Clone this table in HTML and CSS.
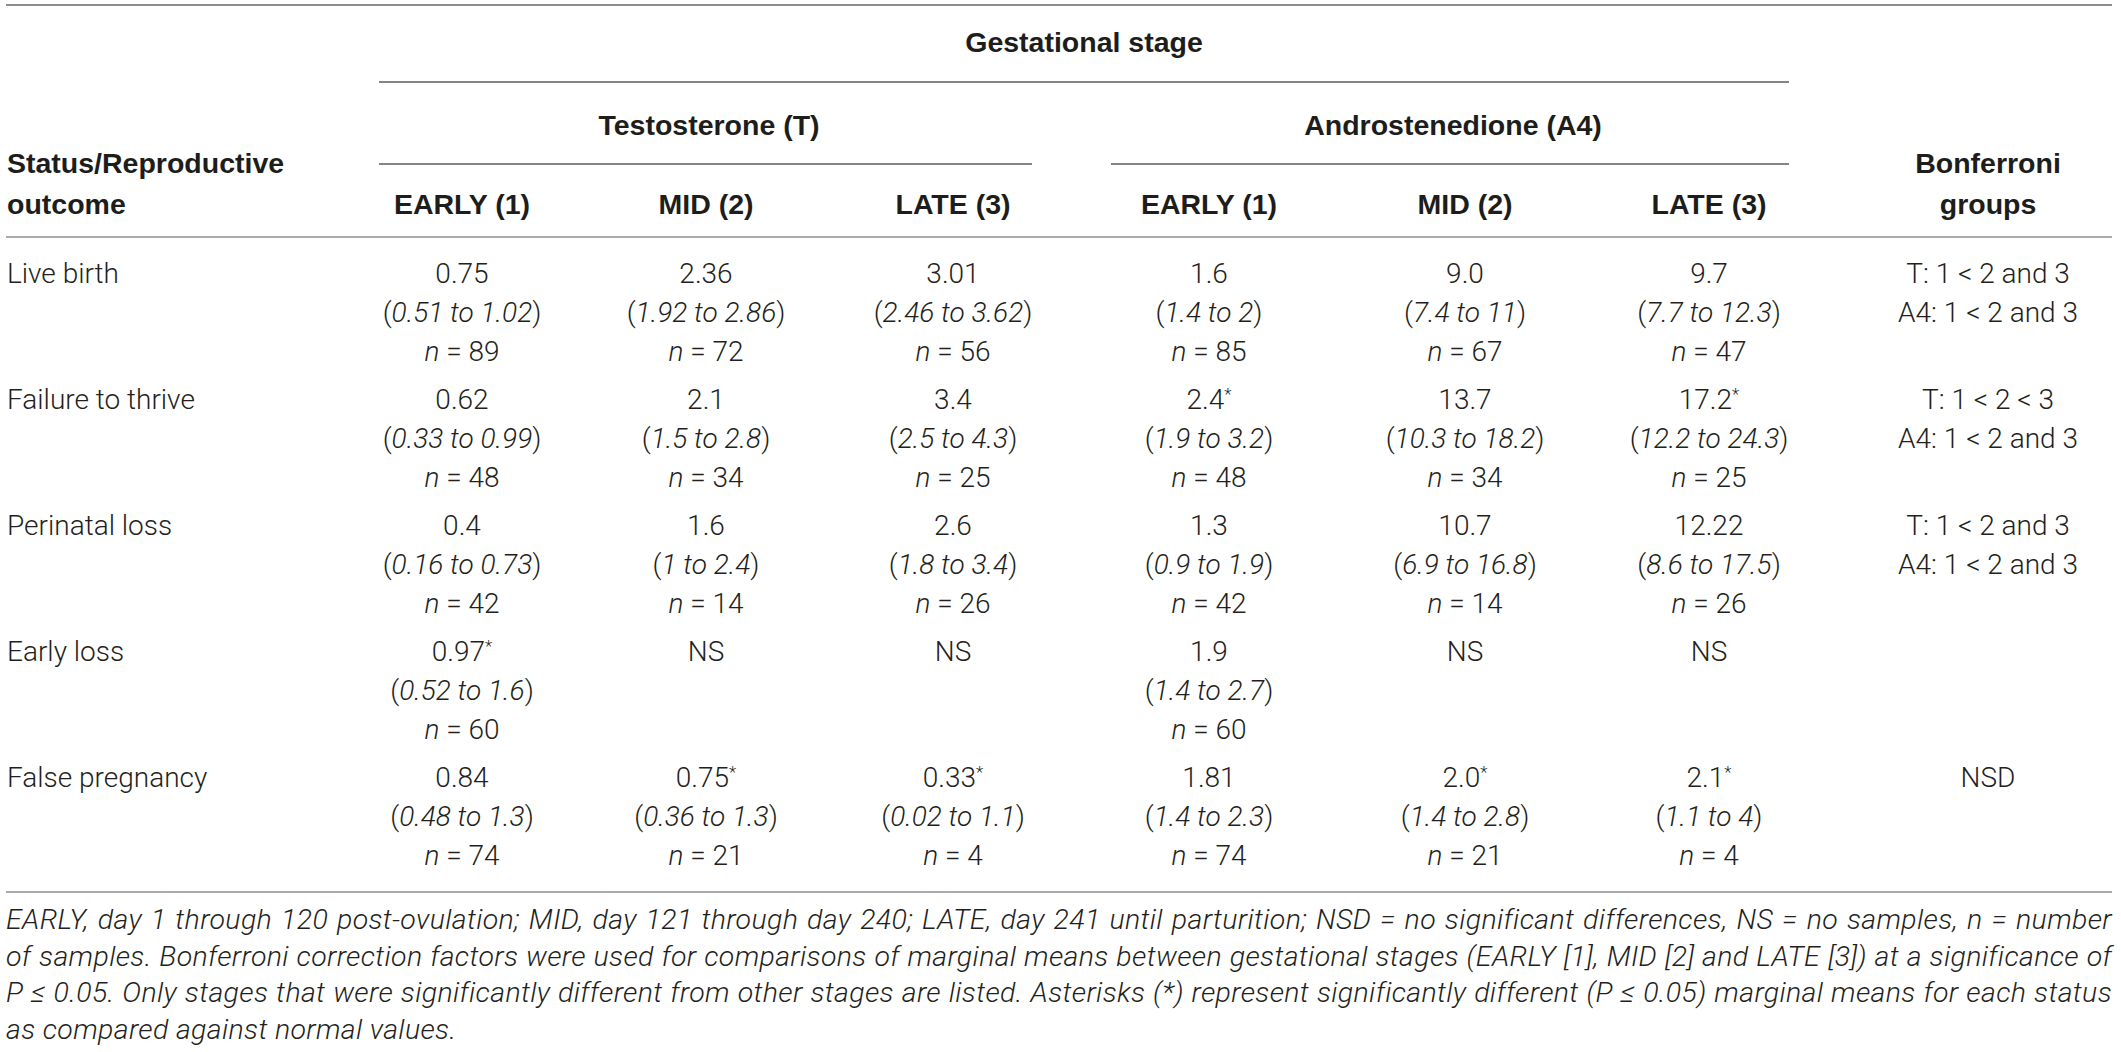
FILE: index.html
```html
<!DOCTYPE html>
<html lang="en">
<head>
<meta charset="utf-8">
<title>Table</title>
<link rel="stylesheet" href="styles.css">
</head>
<body>
<div class="page">
<table class="tbl">
  <colgroup>
    <col class="c-stub"><col class="c-t1"><col class="c-t2"><col class="c-t3"><col class="c-a1"><col class="c-a2"><col class="c-a3"><col class="c-bf">
  </colgroup>
  <thead>
    <tr class="hr1">
      <th rowspan="3" class="stub">Status/Reproductive<br>outcome</th>
      <th colspan="6" class="grp"><div class="lbl">Gestational stage</div><div class="rule rule-g"></div></th>
      <th rowspan="3" class="bonf">Bonferroni<br>groups</th>
    </tr>
    <tr class="hr2">
      <th colspan="3" class="grp"><div class="lbl">Testosterone (T)</div><div class="rule rule-t"></div></th>
      <th colspan="3" class="grp"><div class="lbl">Androstenedione (A4)</div><div class="rule rule-a"></div></th>
    </tr>
    <tr class="hr3">
      <th>EARLY (1)</th><th>MID (2)</th><th>LATE (3)</th>
      <th>EARLY (1)</th><th>MID (2)</th><th>LATE (3)</th>
    </tr>
  </thead>
  <tbody>
    <tr class="first">
      <td class="rl">Live birth</td>
      <td><div>0.75</div><div>(<i>0.51 to 1.02</i>)</div><div><i>n</i> = 89</div></td>
      <td><div>2.36</div><div>(<i>1.92 to 2.86</i>)</div><div><i>n</i> = 72</div></td>
      <td><div>3.01</div><div>(<i>2.46 to 3.62</i>)</div><div><i>n</i> = 56</div></td>
      <td><div>1.6</div><div>(<i>1.4 to 2</i>)</div><div><i>n</i> = 85</div></td>
      <td><div>9.0</div><div>(<i>7.4 to 11</i>)</div><div><i>n</i> = 67</div></td>
      <td><div>9.7</div><div>(<i>7.7 to 12.3</i>)</div><div><i>n</i> = 47</div></td>
      <td class="bf"><div>T: 1 &lt; 2 and 3</div><div>A4: 1 &lt; 2 and 3</div></td>
    </tr>
    <tr>
      <td class="rl">Failure to thrive</td>
      <td><div>0.62</div><div>(<i>0.33 to 0.99</i>)</div><div><i>n</i> = 48</div></td>
      <td><div>2.1</div><div>(<i>1.5 to 2.8</i>)</div><div><i>n</i> = 34</div></td>
      <td><div>3.4</div><div>(<i>2.5 to 4.3</i>)</div><div><i>n</i> = 25</div></td>
      <td><div>2.4<sup>*</sup></div><div>(<i>1.9 to 3.2</i>)</div><div><i>n</i> = 48</div></td>
      <td><div>13.7</div><div>(<i>10.3 to 18.2</i>)</div><div><i>n</i> = 34</div></td>
      <td><div>17.2<sup>*</sup></div><div>(<i>12.2 to 24.3</i>)</div><div><i>n</i> = 25</div></td>
      <td class="bf"><div>T: 1 &lt; 2 &lt; 3</div><div>A4: 1 &lt; 2 and 3</div></td>
    </tr>
    <tr>
      <td class="rl">Perinatal loss</td>
      <td><div>0.4</div><div>(<i>0.16 to 0.73</i>)</div><div><i>n</i> = 42</div></td>
      <td><div>1.6</div><div>(<i>1 to 2.4</i>)</div><div><i>n</i> = 14</div></td>
      <td><div>2.6</div><div>(<i>1.8 to 3.4</i>)</div><div><i>n</i> = 26</div></td>
      <td><div>1.3</div><div>(<i>0.9 to 1.9</i>)</div><div><i>n</i> = 42</div></td>
      <td><div>10.7</div><div>(<i>6.9 to 16.8</i>)</div><div><i>n</i> = 14</div></td>
      <td><div>12.22</div><div>(<i>8.6 to 17.5</i>)</div><div><i>n</i> = 26</div></td>
      <td class="bf"><div>T: 1 &lt; 2 and 3</div><div>A4: 1 &lt; 2 and 3</div></td>
    </tr>
    <tr>
      <td class="rl">Early loss</td>
      <td><div>0.97<sup>*</sup></div><div>(<i>0.52 to 1.6</i>)</div><div><i>n</i> = 60</div></td>
      <td><div>NS</div></td>
      <td><div>NS</div></td>
      <td><div>1.9</div><div>(<i>1.4 to 2.7</i>)</div><div><i>n</i> = 60</div></td>
      <td><div>NS</div></td>
      <td><div>NS</div></td>
      <td class="bf"></td>
    </tr>
    <tr class="last">
      <td class="rl">False pregnancy</td>
      <td><div>0.84</div><div>(<i>0.48 to 1.3</i>)</div><div><i>n</i> = 74</div></td>
      <td><div>0.75<sup>*</sup></div><div>(<i>0.36 to 1.3</i>)</div><div><i>n</i> = 21</div></td>
      <td><div>0.33<sup>*</sup></div><div>(<i>0.02 to 1.1</i>)</div><div><i>n</i> = 4</div></td>
      <td><div>1.81</div><div>(<i>1.4 to 2.3</i>)</div><div><i>n</i> = 74</div></td>
      <td><div>2.0<sup>*</sup></div><div>(<i>1.4 to 2.8</i>)</div><div><i>n</i> = 21</div></td>
      <td><div>2.1<sup>*</sup></div><div>(<i>1.1 to 4</i>)</div><div><i>n</i> = 4</div></td>
      <td class="bf"><div>NSD</div></td>
    </tr>
  </tbody>
</table>
<div class="note">
  <span class="ln">EARLY, day 1 through 120 post-ovulation; MID, day 121 through day 240; LATE, day 241 until parturition; NSD = no significant differences, NS = no samples, n = number</span>
  <span class="ln">of samples. Bonferroni correction factors were used for comparisons of marginal means between gestational stages (EARLY [1], MID [2] and LATE [3]) at a significance of</span>
  <span class="ln">P ≤ 0.05. Only stages that were significantly different from other stages are listed. Asterisks (*) represent significantly different (P ≤ 0.05) marginal means for each status</span>
  <span class="ln end">as compared against normal values.</span>
</div>
</div>
</body>
</html>
```

FILE: styles.css
```css
html, body {
  margin: 0;
  padding: 0;
  background: #ffffff;
}

body {
  font-family: Roboto, "Liberation Sans", sans-serif;
  font-weight: 300;
  color: #231f20;
}

.page {
  padding: 4px 9px 0 6px;
  width: 2106px;
}

.tbl {
  width: 2106px;
  table-layout: fixed;
  border-collapse: separate;
  border-spacing: 0;
  border-top: 2px solid #8d8d8d;
}

.c-stub { width: 334px; }
.c-t1 { width: 244px; }
.c-t2 { width: 244px; }
.c-t3 { width: 250px; }
.c-a1 { width: 262px; }
.c-a2 { width: 250px; }
.c-a3 { width: 238px; }
.c-bf { width: 284px; }

th {
  font-family: "Liberation Sans", Arial, sans-serif;
  font-weight: 700;
  font-size: 28.5px;
  color: #1d1d1b;
  line-height: 40px;
  text-align: center;
  padding: 0;
  vertical-align: top;
}

.hr1 .grp { padding-top: 16px; }
.hr2 .grp { padding-top: 22px; }
.hr3 th {
  padding-top: 19px;
  padding-bottom: 12px;
  border-bottom: 2px solid #ababab;
}

.rule {
  height: 2px;
  background: #858585;
}
.rule-g { margin: 19px 39px 0 39px; }
.rule-t { margin: 18px 46px 0 39px; }
.rule-a { margin: 18px 39px 0 33px; }

th.stub {
  text-align: left;
  vertical-align: bottom;
  line-height: 41px;
  padding: 0 0 11px 1px;
  border-bottom: 2px solid #ababab;
}

th.bonf {
  vertical-align: bottom;
  line-height: 41px;
  padding: 0 0 11px 36px;
  border-bottom: 2px solid #ababab;
}

td {
  font-size: 28px;
  line-height: 39px;
  text-align: center;
  vertical-align: top;
  padding: 9px 0 0 0;
  white-space: nowrap;
}

td.rl {
  text-align: left;
  padding-left: 1px;
}

td.bf {
  padding-left: 36px;
}

tr.first td { padding-top: 16px; }

tr.last td {
  padding-bottom: 16px;
  border-bottom: 2px solid #ababab;
}

td i {
  font-style: italic;
}

sup {
  font-size: 0.6em;
  line-height: 0;
  vertical-align: 0.55em;
}

.note {
  margin-top: 9px;
  font-style: italic;
  font-size: 28.5px;
  letter-spacing: 0.35px;
  line-height: 36.7px;
}

.ln {
  display: block;
  text-align: justify;
  text-align-last: justify;
  white-space: nowrap;
}

.ln.end {
  text-align: left;
  text-align-last: left;
}
```
